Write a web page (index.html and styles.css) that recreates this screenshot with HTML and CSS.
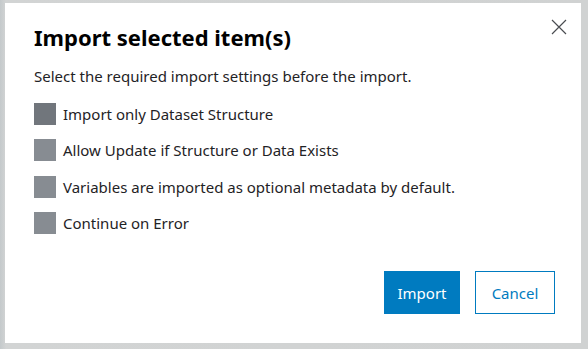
FILE: index.html
```html
<!DOCTYPE html>
<html lang="en">
<head>
  <meta charset="UTF-8" />
  <meta name="viewport" content="width=device-width, initial-scale=1.0"/>
  <title>Import selected item(s)</title>
  <link rel="stylesheet" href="styles.css">
</head>
<body>

  <div class="backdrop">
    <div class="dialog">
      <button class="close" aria-label="Close">
        <svg width="16" height="16" viewBox="0 0 16 16">
          <path d="M1 1 L15 15 M15 1 L1 15" stroke="#4a4d51" stroke-width="1.2" fill="none"/>
        </svg>
      </button>

      <h2>Import selected item(s)</h2>
      <p class="intro">Select the required import settings before the import.</p>

      <ul class="options">
        <li><span class="box active"></span>Import only Dataset Structure</li>
        <li><span class="box"></span>Allow Update if Structure or Data Exists</li>
        <li><span class="box"></span>Variables are imported as optional metadata by default.</li>
        <li><span class="box"></span>Continue on Error</li>
      </ul>

      <div class="actions">
        <button class="btn primary">Import</button>
        <button class="btn secondary">Cancel</button>
      </div>
    </div>
  </div>

</body>
</html>
```

FILE: styles.css
```css
/* dialogo sobre fondo gris */
body {
  margin: 0;
  padding: 0;
  font-family: "Noto Sans", Arial, sans-serif;
  color: #1f2326;
}

.backdrop {
  width: 588px;
  height: 349px;
  background: linear-gradient(90deg, #c4c9cb 0, #d2d4d4 6px, #d0d2d2 100%);
  padding: 3px 0 0 5px;
  box-sizing: border-box;
  overflow: hidden;
}

.dialog {
  position: relative;
  width: 576px;
  height: 340px;
  background: white;
  box-sizing: border-box;
  padding: 21px 29px 0 29px;
  display: flex;
  flex-direction: column;
}

.close {
  position: absolute;
  top: 16px;
  right: 14px;
  background: none;
  border: none;
  padding: 0;
  cursor: pointer;
}

h2 {
  margin: 0;
  font-size: 22px;
  font-weight: bold;
  line-height: 26px;
  color: #000;
}

.intro {
  margin: 16px 0 0 0;
  font-size: 15px;
  line-height: 20px;
}

.options {
  list-style: none;
  margin: 17px 0 0 0;
  padding: 0;
  display: flex;
  flex-direction: column;
  gap: 14.3px;
}

.options li {
  display: flex;
  align-items: center;
  gap: 7px;
  font-size: 15px;
  height: 22px;
}

.box {
  width: 22px;
  height: 22px;
  background: #878c92;
  flex-shrink: 0;
}

.box.active {
  background: #71767c;
}

.actions {
  display: flex;
  justify-content: flex-end;
  gap: 15px;
  margin-top: auto;
  margin-bottom: 29px;
}

.btn {
  font-family: "Noto Sans", Arial, sans-serif;
  font-size: 15px;
  height: 43px;
  padding: 0;
  cursor: pointer;
  box-sizing: border-box;
}

.primary {
  background: #007bc0;
  color: white;
  border: none;
  width: 76px;
}

.secondary {
  background: white;
  color: #007bc0;
  border: 1px solid #007bc0;
  width: 80px;
  margin-right: -3px;
}
```
